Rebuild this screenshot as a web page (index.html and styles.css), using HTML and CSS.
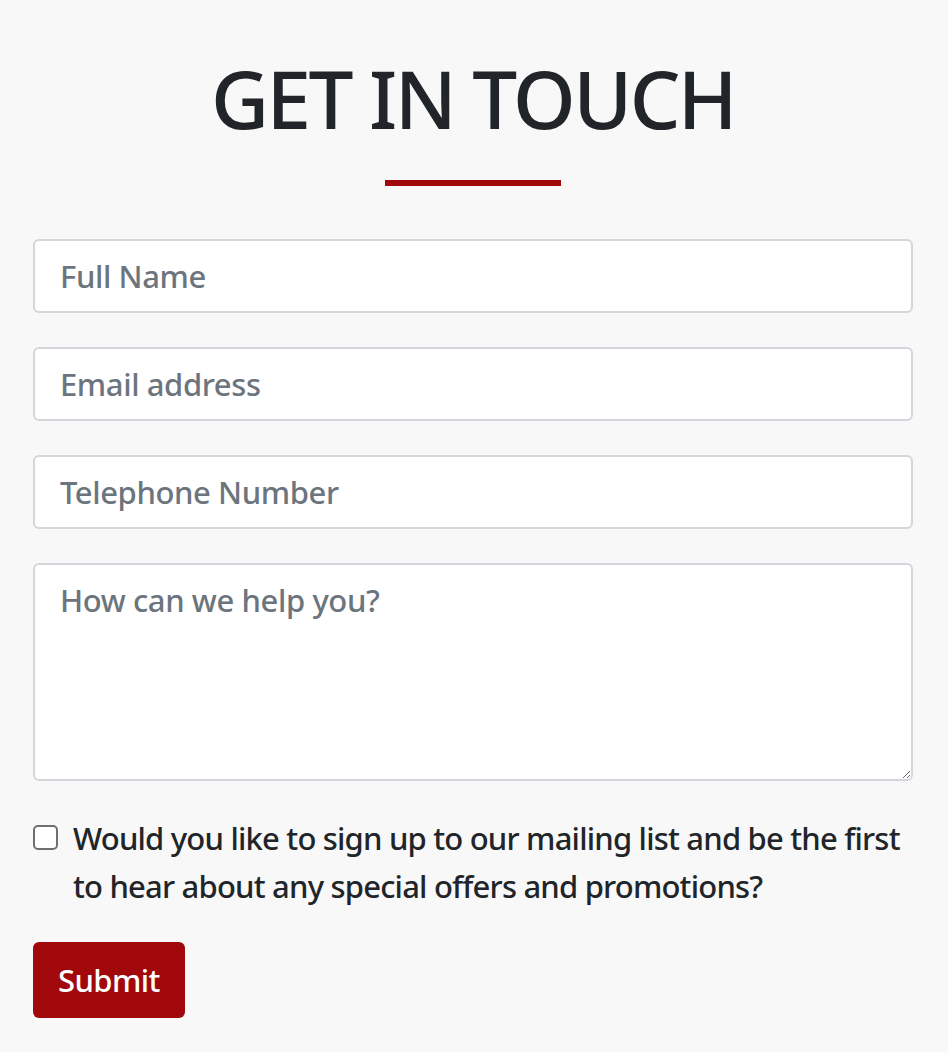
FILE: index.html
```html
<!DOCTYPE html>
<html lang="en">
<head>
<meta charset="utf-8">
<title>Get in touch</title>
<link rel="stylesheet" href="styles.css">
</head>
<body>
<section class="contact">
  <h1 class="title">GET IN TOUCH</h1>
  <div class="rule"></div>
  <form class="form">
    <input class="field" type="text" placeholder="Full Name">
    <input class="field" type="email" placeholder="Email address">
    <input class="field" type="tel" placeholder="Telephone Number">
    <textarea class="field area" placeholder="How can we help you?"></textarea>
    <label class="check">
      <input class="box" type="checkbox">
      <span class="check-text">Would you like to sign up to our mailing list and be the first to hear about any special offers and promotions?</span>
    </label>
    <div class="actions">
      <button class="submit" type="button">Submit</button>
    </div>
  </form>
</section>
</body>
</html>
```
FILE: styles.css
```css
* { box-sizing: border-box; }
html, body { margin: 0; padding: 0; }
body {
  background: #f8f8f8;
  font-family: "Noto Sans", "Open Sans", sans-serif;
  font-weight: 500;
  color: #212529;
}
.contact {
  padding: 50px 35px 0 33px;
  display: flex;
  flex-direction: column;
  align-items: center;
}
.title {
  margin: 0;
  font-size: 80px;
  font-weight: 500;
  line-height: 96px;
  letter-spacing: -2.6px;
  color: #212529;
}
.rule {
  width: 176px;
  height: 6px;
  background: #a0080c;
  margin-top: 34px;
}
.form {
  width: 100%;
  margin-top: 53px;
  display: flex;
  flex-direction: column;
  gap: 34px;
}
.field {
  display: block;
  width: 100%;
  height: 74px;
  padding: 0 25px;
  font-family: inherit;
  font-weight: 500;
  font-size: 31px;
  line-height: 46px;
  letter-spacing: -0.4px;
  color: #212529;
  background: #fff;
  border: 2px solid #d3d7dc;
  border-radius: 6px;
  outline: none;
}
.field::placeholder { color: #6c757d; }
.area {
  height: 218px;
  resize: vertical;
  padding-top: 12px;
}
.check {
  display: flex;
  align-items: flex-start;
  gap: 15px;
  margin-top: -1px;
  font-size: 31px;
  line-height: 48px;
  letter-spacing: -0.8px;
  color: #212529;
}
.box {
  appearance: none;
  -webkit-appearance: none;
  flex: 0 0 auto;
  width: 25px;
  height: 25px;
  margin: 11px 0 0 0;
  background: #fff;
  border: 2px solid #6f6f6f;
  border-radius: 5px;
}
.actions { margin-top: -2px; }
.submit {
  height: 76px;
  padding: 0 25px;
  font-family: inherit;
  font-size: 31px;
  font-weight: 500;
  letter-spacing: -0.6px;
  color: #fff;
  background: #a0080c;
  border: none;
  border-radius: 6px;
}
```
